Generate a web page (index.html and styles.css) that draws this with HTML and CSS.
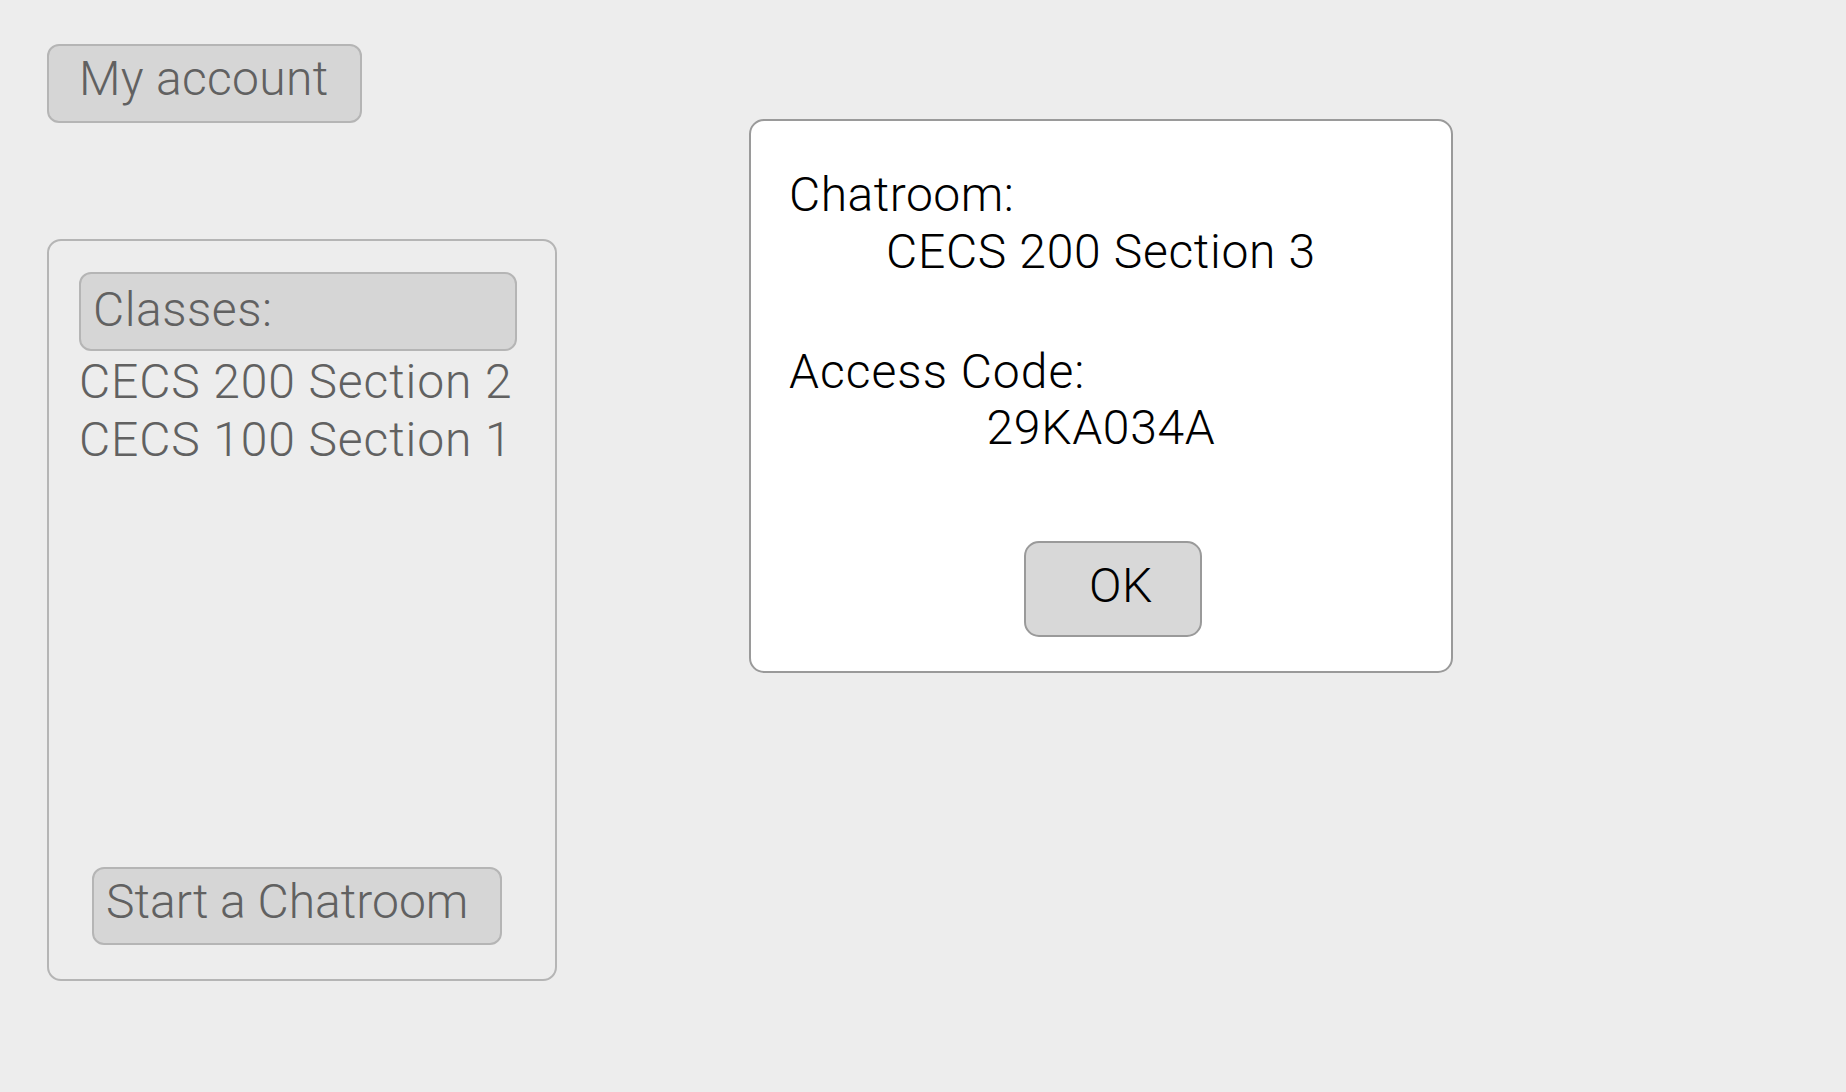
FILE: index.html
```html
<!DOCTYPE html>
<html lang="en">
<head>
<meta charset="utf-8">
<title>Chatroom</title>
<link rel="stylesheet" href="styles.css">
</head>
<body>
<div class="page">
  <div class="left-col">
    <div class="btn account-btn">My account</div>
    <div class="panel">
      <div class="classes-head">Classes:</div>
      <ul class="class-list">
        <li>CECS 200 Section 2</li>
        <li>CECS 100 Section 1</li>
      </ul>
      <div class="btn start-btn">Start a Chatroom</div>
    </div>
  </div>
  <div class="dialog">
    <div class="label">Chatroom:</div>
    <div class="value">CECS 200 Section 3</div>
    <div class="label label-gap">Access Code:</div>
    <div class="value">29KA034A</div>
    <div class="ok-btn">OK</div>
  </div>
</div>
</body>
</html>
```

FILE: styles.css
```css
html, body {
  margin: 0;
  padding: 0;
}

body {
  background: #ededed;
  font-family: Roboto, "Liberation Sans", Arial, sans-serif;
  font-weight: 300;
  font-size: 48px;
  letter-spacing: 0.5px;
  color: #616161;
  width: 1846px;
  height: 1092px;
  overflow: hidden;
}

.page {
  display: flex;
  align-items: flex-start;
  gap: 192px;
  padding: 44px 0 0 47px;
}

.left-col {
  display: flex;
  flex-direction: column;
  width: 510px;
}

.btn {
  box-sizing: border-box;
  background: #d6d6d6;
  border: 2px solid #b5b5b5;
  border-radius: 12px;
  white-space: nowrap;
}

.account-btn {
  width: 315px;
  height: 79px;
  line-height: 66px;
  padding: 0 0 9px 30px;
  letter-spacing: 0.3px;
}

.panel {
  box-sizing: border-box;
  margin-top: 116px;
  width: 510px;
  height: 742px;
  border: 2px solid #b5b5b5;
  border-radius: 14px;
  padding: 31px 0 34px 30px;
  display: flex;
  flex-direction: column;
}

.classes-head {
  box-sizing: border-box;
  width: 438px;
  height: 79px;
  background: #d6d6d6;
  border: 2px solid #b5b5b5;
  border-radius: 12px;
  line-height: 72px;
  padding: 0 0 3px 12px;
}

.class-list {
  list-style: none;
  margin: 2px 0 0 0;
  padding: 0;
  line-height: 58.3px;
  letter-spacing: 0.9px;
}

.start-btn {
  margin-top: auto;
  margin-left: 13px;
  width: 410px;
  height: 78px;
  line-height: 66px;
  padding: 0 0 8px 12px;
  letter-spacing: 0;
}

.dialog {
  box-sizing: border-box;
  margin-top: 75px;
  width: 704px;
  height: 554px;
  background: #ffffff;
  border: 2px solid #9a9a9a;
  border-radius: 15px;
  padding: 46px 38px 0 38px;
  color: #000000;
  display: flex;
  flex-direction: column;
  line-height: 56.6px;
}

.label {
  text-align: left;
}

.label-gap {
  margin-top: 63.4px;
  letter-spacing: 1px;
}

.value {
  text-align: center;
  letter-spacing: 0.7px;
}

.ok-btn {
  box-sizing: border-box;
  align-self: center;
  margin: 84px 0 0 24px;
  width: 178px;
  height: 96px;
  background: #d8d8d8;
  border: 2px solid #9a9a9a;
  border-radius: 15px;
  text-align: center;
  line-height: 85px;
  padding: 0 0 7px 16px;
}
```
